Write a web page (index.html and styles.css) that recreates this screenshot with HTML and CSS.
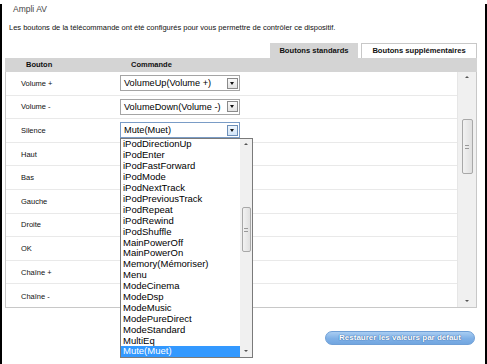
FILE: index.html
```html
<!DOCTYPE html>
<html lang="fr">
<head>
<meta charset="utf-8">
<title>Ampli AV</title>
<link rel="stylesheet" href="styles.css">
</head>
<body>
<div class="page">
  <div class="title">Ampli AV</div>
  <div class="desc">Les boutons de la télécommande ont été configurés pour vous permettre de contrôler ce dispositif.</div>
  <div class="tabs">
    <div class="tab active">Boutons standards</div>
    <div class="tab">Boutons supplémentaires</div>
  </div>
  <div class="grid">
    <div class="head">
      <div class="col-label">Bouton</div>
      <div class="col-cmd">Commande</div>
    </div>
    <div class="body">
      <div class="rows">
        <div class="row"><div class="col-label">Volume +</div><div class="select"><span class="val">VolumeUp(Volume +)</span><span class="arrow"></span></div></div>
        <div class="row"><div class="col-label">Volume -</div><div class="select"><span class="val">VolumeDown(Volume -)</span><span class="arrow"></span></div></div>
        <div class="row"><div class="col-label">Silence</div>
          <div class="select open"><span class="val">Mute(Muet)</span><span class="arrow"></span>
            <div class="list">
              <div class="items">
                <div class="item">iPodDirectionUp</div>
                <div class="item">iPodEnter</div>
                <div class="item">iPodFastForward</div>
                <div class="item">iPodMode</div>
                <div class="item">iPodNextTrack</div>
                <div class="item">iPodPreviousTrack</div>
                <div class="item">iPodRepeat</div>
                <div class="item">iPodRewind</div>
                <div class="item">iPodShuffle</div>
                <div class="item">MainPowerOff</div>
                <div class="item">MainPowerOn</div>
                <div class="item">Memory(Mémoriser)</div>
                <div class="item">Menu</div>
                <div class="item">ModeCinema</div>
                <div class="item">ModeDsp</div>
                <div class="item">ModeMusic</div>
                <div class="item">ModePureDirect</div>
                <div class="item">ModeStandard</div>
                <div class="item">MultiEq</div>
                <div class="item sel">Mute(Muet)</div>
              </div>
              <div class="lscroll">
                <span class="up"></span>
                <span class="lthumb"><i></i></span>
                <span class="down"></span>
              </div>
            </div>
          </div>
        </div>
        <div class="row"><div class="col-label">Haut</div></div>
        <div class="row"><div class="col-label">Bas</div></div>
        <div class="row"><div class="col-label">Gauche</div></div>
        <div class="row"><div class="col-label">Droite</div></div>
        <div class="row"><div class="col-label">OK</div></div>
        <div class="row"><div class="col-label">Chaîne +</div></div>
        <div class="row last"><div class="col-label">Chaîne -</div></div>
      </div>
      <div class="scroll">
        <span class="up"></span>
        <span class="thumb"><i></i></span>
        <span class="down"></span>
      </div>
    </div>
  </div>
  <div class="footer">
    <div class="btn">Restaurer les valeurs par défaut</div>
  </div>
</div>
</body>
</html>
```
FILE: styles.css
```css
html, body { margin: 0; padding: 0; background: #fff; }
.page {
  width: 487px; height: 364px; box-sizing: border-box;
  border: 2px solid #000; border-top: none;
  font-family: "Liberation Sans", Arial, sans-serif;
  color: #1a1a1a; background: #fff;
}
.title { margin: 4px 0 0 11px; font-size: 8.5px; line-height: 10px; color: #444; }
.desc { margin: 9px 0 0 7px; font-size: 7.5px; line-height: 10px; color: #111; }
.tabs { display: flex; justify-content: flex-end; gap: 3px; margin: 10px 8px 0 0; height: 15px; }
.tab {
  box-sizing: border-box; height: 15px; width: 116px;
  border: 1px solid #c8c8c8; border-bottom: none;
  font-size: 7.6px; font-weight: bold; line-height: 14px; text-align: center; color: #111;
}
.tab.active { width: 88px; background: #d4d4d4; border-color: #d4d4d4; }
.grid { margin: 0 8px 0 3px; }
.head { display: flex; height: 14px; background: #d4d4d4; font-size: 7.5px; font-weight: bold; line-height: 13px; color: #111; }
.head .col-label { padding-left: 21px; width: 105px; }
.body { display: flex; height: 236px; box-sizing: border-box; border: 1px solid #c8c8c8; border-top: none; }
.rows { flex: 1; }
.row { display: flex; align-items: center; height: 23.6px; box-sizing: border-box; border-bottom: 1px solid #e9e9e9; font-size: 7.5px; color: #111; }
.row.last { border-bottom: none; }
.row .col-label { width: 99px; padding-left: 15px; }
.select {
  position: relative; display: flex; align-items: center;
  width: 120px; height: 16px; box-sizing: border-box;
  border: 1px solid #a5a5a5; background: #fff;
  font-size: 9.2px; color: #000;
}
.select.open { border-color: #7a9cc6; }
.val { flex: 1; padding-left: 3px; white-space: nowrap; overflow: hidden; }
.arrow {
  width: 11px; height: 11px; margin-right: 1px; box-sizing: border-box;
  border: 1px solid #8a8a8a; background: linear-gradient(#fafafa, #e3e3e3);
  position: relative;
}
.select.open .arrow { border-color: #6d8fb8; background: linear-gradient(#eef5fc, #d4e6f8); }
.arrow::after {
  content: ""; position: absolute; left: 2px; top: 3px;
  border-left: 2.5px solid transparent; border-right: 2.5px solid transparent; border-top: 3px solid #111;
}
.list {
  position: absolute; left: -1px; top: 15px; z-index: 5;
  width: 133px; height: 220px; box-sizing: border-box;
  border: 1px solid #7a7a7a; background: #fff; display: flex;
}
.items { flex: 1; }
.item { height: 10.9px; line-height: 10.9px; font-size: 9.5px; padding-left: 2px; color: #000; white-space: nowrap; }
.item.sel { background: #3399ff; color: #fff; }
.lscroll, .scroll {
  display: flex; flex-direction: column; align-items: center;
  background: #f0f0f0; position: relative;
}
.lscroll { width: 12px; }
.scroll { width: 18px; border-left: 1px solid #e6e6e6; }
.up, .down { width: 0; height: 0; border-left: 2px solid transparent; border-right: 2px solid transparent; }
.up { border-bottom: 2px solid #555; margin-top: 4px; }
.down { border-top: 2px solid #555; margin-top: auto; margin-bottom: 5px; }
.lthumb, .thumb {
  box-sizing: border-box; border: 1px solid #a8a8a8; border-radius: 2px;
  background: linear-gradient(90deg, #f2f2f2, #e0e0e0);
  display: flex; align-items: center; justify-content: center;
}
.lthumb { width: 9px; height: 45px; margin-top: 62px; }
.thumb { width: 11px; height: 55px; margin-top: 41px; }
.lthumb i, .thumb i { display: block; width: 4px; height: 4px; border-top: 1px solid #999; border-bottom: 1px solid #999; box-sizing: border-box; }
.footer { display: flex; justify-content: flex-end; margin: 23px 10px 0 0; }
.btn {
  height: 14px; width: 150px; box-sizing: border-box; border-radius: 8px;
  border: 1px solid #6f9fd6;
  background: linear-gradient(#a9cdf2, #7fb0e6 55%, #72a6e0);
  color: #fff; font-size: 8px; font-weight: bold; line-height: 12px; text-align: center;
  text-shadow: 0 0 1px #2f62a0, 0 0 1px #2f62a0;
}
```
